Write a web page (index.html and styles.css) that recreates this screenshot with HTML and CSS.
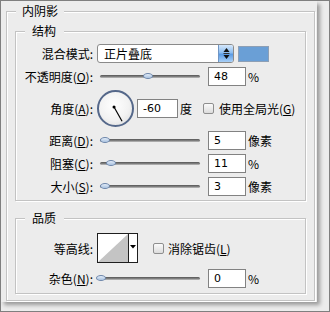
FILE: index.html
```html
<!DOCTYPE html>
<html>
  <head>
    <title>内阴影</title>
    <link rel="stylesheet" href="styles.css">
  </head>

  <body>
    <div class="panel">
      <fieldset class="group outer">
        <legend>内阴影</legend>

        <!-- 结构 -->
        <fieldset class="group inner">
          <legend>结构</legend>

          <div class="row">
            <label class="name">混合模式:</label>
            <div class="select">
              <span class="select-text">正片叠底</span>
              <span class="stepper">
                <svg width="13" height="17" viewBox="0 0 13 17">
                  <path d="M6.5 3 L9.5 7 L3.5 7 Z" fill="#111"/>
                  <path d="M3.5 8.5 H9.5" stroke="#333" stroke-width="1"/>
                  <path d="M6.5 14 L9.5 10 L3.5 10 Z" fill="#111"/>
                </svg>
              </span>
            </div>
            <div class="swatch"></div>
          </div>

          <div class="row">
            <label class="name">不透明度(<u>O</u>):</label>
            <div class="slider"><div class="thumb" style="left: 46px"></div></div>
            <input class="num" type="text" value="48">
            <span class="unit">%</span>
          </div>

          <div class="row tall">
            <label class="name">角度(<u>A</u>):</label>
            <div class="dial">
              <svg width="37" height="37" viewBox="0 0 37 37">
                <line x1="18" y1="18" x2="26.5" y2="33" stroke="#000" stroke-width="1.2"/>
                <circle cx="18" cy="18" r="1.6" fill="#000"/>
              </svg>
            </div>
            <input class="num angle" type="text" value="-60">
            <span class="unit">度</span>
            <label class="check global"><span class="box"></span>使用全局光(<u>G</u>)</label>
          </div>

          <div class="row">
            <label class="name">距离(<u>D</u>):</label>
            <div class="slider"><div class="thumb" style="left: 3px"></div></div>
            <input class="num" type="text" value="5">
            <span class="unit">像素</span>
          </div>

          <div class="row">
            <label class="name">阻塞(<u>C</u>):</label>
            <div class="slider"><div class="thumb" style="left: 9px"></div></div>
            <input class="num" type="text" value="11">
            <span class="unit">%</span>
          </div>

          <div class="row">
            <label class="name">大小(<u>S</u>):</label>
            <div class="slider"><div class="thumb" style="left: 3px"></div></div>
            <input class="num" type="text" value="3">
            <span class="unit">像素</span>
          </div>
        </fieldset>

        <!-- 品质 -->
        <fieldset class="group inner quality">
          <legend>品质</legend>

          <div class="row contour-row">
            <label class="name">等高线:</label>
            <div class="contour">
              <div class="curve">
                <svg width="30" height="28" viewBox="0 0 30 28">
                  <path d="M0 28 L30 0 L30 28 Z" fill="#c4c4c4"/>
                </svg>
              </div>
              <div class="drop">
                <svg width="7" height="4" viewBox="0 0 7 4">
                  <path d="M0 0 H6 L3 3.5 Z" fill="#000"/>
                </svg>
              </div>
            </div>
            <label class="check anti"><span class="box"></span>消除锯齿(<u>L</u>)</label>
          </div>

          <div class="row">
            <label class="name">杂色(<u>N</u>):</label>
            <div class="slider"><div class="thumb" style="left: -1px"></div></div>
            <input class="num" type="text" value="0">
            <span class="unit">%</span>
          </div>
        </fieldset>
      </fieldset>
    </div>
  </body>
</html>
```

FILE: styles.css
```css
body {
  margin: 0;
  width: 330px;
  height: 312px;
  box-sizing: border-box;
  border: 1px solid #7f7f7f;
  background-color: #ececec;
  font-family: "Noto Sans CJK SC", sans-serif;
  font-size: 12px;
  color: #000;
  overflow: hidden;
}

.panel {
  width: 316px;
  box-sizing: border-box;
  padding: 2px 2px 1px 5px;
  background-color: #ececec;
  box-shadow: 3px 3px 4px rgba(0, 0, 0, 0.35);
}

/* etched group boxes */
.group {
  margin: 0;
  min-width: 0;
  border: 1px solid #c3c3c3;
  box-shadow: inset 1px 1px 0 #fff, 1px 1px 0 #fff;
}

.group legend {
  padding: 0 6px;
  line-height: 16px;
  background-color: #ececec;
}

.outer {
  padding: 4px 8px 6px 8px;
}

.outer > legend {
  margin-left: 1px;
}

.inner {
  padding: 5px 0 4px 0;
  display: flex;
  flex-direction: column;
  gap: 4px;
}

.inner > legend {
  margin-left: 9px;
  padding: 0 8px 0 7px;
}

.quality {
  margin-top: 9px;
  padding: 7px 0 5px 0;
  gap: 6px;
}

.row {
  display: flex;
  align-items: center;
  height: 19px;
}

.row.tall {
  height: 37px;
}

.row.contour-row {
  height: 30px;
}

.name {
  width: 77px;
  flex: none;
  text-align: right;
  margin-right: 4px;
  white-space: nowrap;
}

u {
  text-decoration-thickness: 1px;
  text-underline-offset: 1px;
}

/* blend mode select */
.select {
  width: 137px;
  height: 19px;
  box-sizing: border-box;
  display: flex;
  border: 1px solid #8a8a8a;
  border-radius: 3px;
  background-color: #fff;
  overflow: hidden;
}

.select-text {
  flex: 1;
  padding-left: 6px;
  line-height: 17px;
}

.stepper {
  width: 14px;
  display: flex;
  align-items: center;
  justify-content: center;
  background: linear-gradient(#d6e8fb, #8cbdf0 45%, #5a9be4 55%, #a9d0f7);
  border-left: 1px solid #6f95c4;
}

.swatch {
  width: 31px;
  height: 16px;
  box-sizing: border-box;
  margin-left: 4px;
  background-color: #6a9fd6;
  border: 1px solid #8d9fb5;
}

/* sliders */
.slider {
  position: relative;
  width: 106px;
  height: 19px;
  flex: none;
}

.slider::before {
  content: "";
  position: absolute;
  left: 3px;
  right: 3px;
  top: 8px;
  height: 3px;
  border-radius: 2px;
  background: linear-gradient(#555, #8c8c8c 70%, #d0d0d0);
}

.thumb {
  position: absolute;
  top: 6px;
  width: 10px;
  height: 6px;
  box-sizing: border-box;
  border: 1px solid #6d86aa;
  border-radius: 50%;
  background: linear-gradient(#e4eefa, #a8c0de);
}

.num {
  width: 38px;
  height: 19px;
  box-sizing: border-box;
  margin: 0 0 0 5px;
  padding: 0 0 0 5px;
  border: 1px solid #828282;
  background-color: #fff;
  font-family: "DejaVu Sans", sans-serif;
  font-size: 11px;
  color: #000;
  outline: none;
}

.unit {
  margin-left: 2px;
}

/* angle */
.dial {
  width: 37px;
  height: 37px;
  box-sizing: border-box;
  border: 2px solid #55688a;
  border-radius: 50%;
  background: radial-gradient(circle at 45% 40%, #fff, #f2f2f2 55%, #d9d9d9);
  display: flex;
  align-items: center;
  justify-content: center;
}

.dial svg {
  margin: -2px 0 0 -2px;
}

.angle {
  width: 41px;
  margin-left: 3px;
}

.check {
  display: flex;
  align-items: center;
  white-space: nowrap;
}

.box {
  width: 11px;
  height: 11px;
  box-sizing: border-box;
  margin-right: 5px;
  border: 1px solid #8e8e8e;
  border-radius: 2px;
  background: linear-gradient(#fafafa, #dcdcdc);
}

.global {
  margin-left: 11px;
}

.anti {
  margin-left: 15px;
}

.anti .box {
  margin-right: 4px;
}

/* contour picker */
.contour {
  width: 41px;
  height: 30px;
  box-sizing: border-box;
  display: flex;
  border: 1px solid #1e1e1e;
  background-color: #fff;
}

.curve {
  width: 30px;
  display: flex;
}

.drop {
  flex: 1;
  border-left: 1px solid #1e1e1e;
  display: flex;
  align-items: center;
  justify-content: center;
  padding-bottom: 2px;
}
```
